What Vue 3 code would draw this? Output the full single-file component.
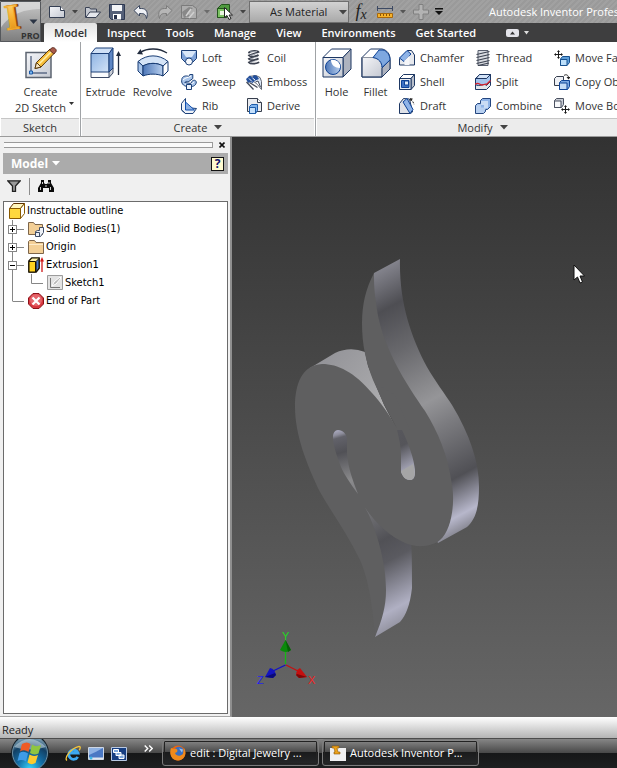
<script setup>
import { ref } from 'vue'

const activeTab = ref('Model')
const tabs = ['Model', 'Inspect', 'Tools', 'Manage', 'View', 'Environments', 'Get Started']

const quickTools = [
  { icon: 'new', label: 'New' },
  { drop: true, label: 'New options' },
  { icon: 'open', label: 'Open' },
  { icon: 'save', label: 'Save' },
  { icon: 'undo', label: 'Undo' },
  { icon: 'redo', label: 'Redo' },
  { icon: 'update', label: 'Update' },
  { drop: true, soft: true, label: 'Update options' },
  { icon: 'pick', label: 'Select' },
  { drop: true, label: 'Select options' }
]

const panels = [
  {
    name: 'Create', key: 'create',
    large: [
      { icon: 'extrude', label: 'Extrude' },
      { icon: 'revolve', label: 'Revolve' }
    ],
    columns: [
      [['loft', 'Loft'], ['sweep', 'Sweep'], ['rib', 'Rib']],
      [['coil', 'Coil'], ['emboss', 'Emboss'], ['derive', 'Derive']]
    ]
  },
  {
    name: 'Modify', key: 'modify',
    large: [
      { icon: 'hole', label: 'Hole' },
      { icon: 'fillet', label: 'Fillet' }
    ],
    columns: [
      [['chamfer', 'Chamfer'], ['shell', 'Shell'], ['draft', 'Draft']],
      [['thread', 'Thread'], ['split', 'Split'], ['combine', 'Combine']],
      [['moveface', 'Move Face'], ['copy', 'Copy Object'], ['movebody', 'Move Bodies']]
    ]
  }
]

const tree = [
  { icon: 'folderbody', label: 'Solid Bodies(1)', mark: '+' },
  { icon: 'folder', label: 'Origin', mark: '+' },
  { icon: 'extrusion', label: 'Extrusion1', mark: '-' },
  { icon: 'sketch', label: 'Sketch1', nested: true },
  { icon: 'end', label: 'End of Part', last: true }
]
</script>

<template>
  <div class="app">
    <svg class="defs" aria-hidden="true">
      <defs>
        <linearGradient id="gBlue" x1="0" y1="0" x2="1" y2="1"><stop offset="0" stop-color="#8fb4e3" /><stop offset="1" stop-color="#d3e3f7" /></linearGradient>
        <linearGradient id="gBlueDeep" x1="0" y1="0" x2="1" y2="0"><stop offset="0" stop-color="#4d77b8" /><stop offset="1" stop-color="#b8cfee" /></linearGradient>
        <linearGradient id="gGrey" x1="0" y1="0" x2="1" y2="1"><stop offset="0" stop-color="#f4f5f8" /><stop offset="1" stop-color="#c5c9d2" /></linearGradient>
        <linearGradient id="gGold" x1="0" y1="0" x2="0" y2="1"><stop offset="0" stop-color="#ffe08a" /><stop offset=".5" stop-color="#f9b233" /><stop offset="1" stop-color="#d9860f" /></linearGradient>
      </defs>

      <symbol id="i-new" viewBox="0 0 16 16"><path d="M.5 2.500h11l4 4v7H.5z" fill="url(#gGrey)" stroke="#343e52" /><path d="M11.500 2.500v4h4" fill="#fff" stroke="#343e52" /></symbol>
      <symbol id="i-open" viewBox="0 0 16 16"><path d="M.5 13.500v-10h4l1 1.500h6v3" fill="#c4c8d0" stroke="#3a4255" /><path d="M.8 13.500l4-5.500h10.700l-4.500 5.500z" fill="#e6e8ed" stroke="#3a4255" /></symbol>
      <symbol id="i-save" viewBox="0 0 16 16"><path d="M.5.500h15v15h-13l-2-2z" fill="#556078" stroke="#2c3750" /><path d="M3 1h10v6H3z" fill="#f3f4f6" /><path d="M4 10h8v5.500H4z" fill="#fff" /><path d="M5 11h3v4H5z" fill="#26304a" /></symbol>
      <symbol id="i-undo" viewBox="0 0 16 16"><path d="M1 6.500L6.500 1.500v3h2c5 0 7 4 5 10-.5-4-2.500-5-5-5h-2v2.500z" fill="#eff1f5" stroke="#3b475f" stroke-linejoin="round" /></symbol>
      <symbol id="i-redo" viewBox="0 0 16 16"><path d="M15 6.500L9.500 1.500v3h-2c-5 0-7 4-5 10 .5-4 2.500-5 5-5h2v2.500z" fill="#b6b6b6" stroke="#7c7c7c" stroke-linejoin="round" /></symbol>
      <symbol id="i-update" viewBox="0 0 16 16"><path d="M.5 1.500h11l4 3v10H.5z" fill="#adadad" stroke="#7b7b7b" /><path d="M1 8l7-5 4 1-6 5 3 3-6 2z" fill="#888" /><path d="M5 12l5-7M8 14l5-6" stroke="#d0d0d0" stroke-width="1.500" /></symbol>
      <symbol id="i-pick" viewBox="0 0 16 16"><path d="M.5 4.500l4-4h8v9l-3 4h-9z" fill="#4f9a3f" stroke="#24561d" /><path d="M.5 4.500h9v9h-9z" fill="#7cc263" stroke="#24561d" /><path d="M3 7h5v4H3z" fill="#e8f5df" /><path d="M7.500 3.500v10l2.500-2 2 4 2-1-2-3.500h3.500z" fill="#fff" stroke="#222" /></symbol>
      <symbol id="i-measure" viewBox="0 0 16 16"><path d="M.5 2v5M15.500 2v5M1 4.500h14" stroke="#3d4a63" fill="none" /><path d="M.5 9.500h15v4H.5z" fill="#f6b32c" stroke="#a8690c" /><path d="M3.500 10v2M6.500 10v2M9.500 10v2M12.500 10v2" stroke="#8b5408" /></symbol>
      <symbol id="i-plus" viewBox="0 0 16 16"><path d="M6 .500h4V6h5.500v4H10v5.500H6V10H.5V6H6z" fill="#b3b3b3" stroke="#808080" /></symbol>

      <symbol id="i-sketch2d" viewBox="0 0 32 32"><path d="M1 5.500h25v25H1z" fill="url(#gGrey)" stroke="#5c6470" stroke-width="1.500" /><path d="M6 9v17h16" fill="none" stroke="#23365c" /><path d="M4.500 24h3v3h-3z" fill="#7cb8f0" stroke="#1b5aa8" /><path d="M10 21.500l1.500-6L25 2l4.500 4L16 20z" fill="#f7bd3a" stroke="#5a3a0c" /><path d="M13.500 17.500L27 4" stroke="#fff0a8" stroke-width="1.600" /><path d="M10 21.500l1.500-6 4.500 4.500z" fill="#f7e4c0" stroke="#5a3a0c" /><path d="M24.500 3L27 .800c2-.8 5 1.500 4 3.700L28.800 7z" fill="#a85a4a" stroke="#5b2a20" /></symbol>
      <symbol id="i-extrude" viewBox="0 0 32 32"><path d="M1 25l4-4h18l-4 9.500H1z" fill="#fafbfd" stroke="#3c4a66" /><path d="M19 25l4-4v5l-4 4.500z" fill="#c9cdd5" stroke="#3c4a66" /><path d="M1 6.500h18V25H1z" fill="url(#gBlue)" stroke="#1d4079" /><path d="M1 6.500L5.500 1H23l-4 5.500z" fill="#cfe0f6" stroke="#1d4079" /><path d="M19 6.500L23 1v20l-4 4z" fill="#5f87c4" stroke="#1d4079" /><path d="M28.500 28V6" stroke="#222c3e" stroke-width="1.300" /><path d="M26 9l2.500-5L31 9z" fill="#222c3e" /></symbol>
      <symbol id="i-revolve" viewBox="0 0 32 32"><path d="M1 14.500C10 7 22 7 31 14.500l-5 4.500c-6-3.500-14-3.500-20 0z" fill="#d5e4f7" stroke="#173b73" /><path d="M1 14.500l5 4.500v10l-5-5z" fill="#a9c5ea" stroke="#173b73" /><path d="M6 19c6-3.500 14-3.500 20 0v10c-6-2.500-14-2.500-20 0z" fill="url(#gBlueDeep)" stroke="#173b73" /><path d="M31 14.500l-5 4.500v10l5-5z" fill="#fff" stroke="#173b73" /><path d="M3 5.500c8-5 19-4.500 27 .5" fill="none" stroke="#222c3e" stroke-width="1.300" /><path d="M0 7l3.500-5L6 7.500z" fill="#222c3e" /></symbol>
      <symbol id="i-hole" viewBox="0 0 32 32"><path d="M2 10.500L10.500 2H30l-8 8.500z" fill="#fff" stroke="#1d3763" /><path d="M22 10.500L30 2v20l-8 8z" fill="#aeb3bf" stroke="#1d3763" /><path d="M2 10.500h20V30H2z" fill="url(#gGrey)" stroke="#1d3763" /><circle cx="12" cy="20" r="7.500" fill="url(#gBlueDeep)" stroke="#0f4396" /><path d="M10 13c0 5 4 8 9 8 1-4-3-9-9-8z" fill="#fff" /></symbol>
      <symbol id="i-fillet" viewBox="0 0 32 32"><path d="M2 10.500L10.500 2H22c5 1 8 5 8 10v10l-8 8H2z" fill="#fff" stroke="#1d3763" /><path d="M2 10.500h11c6 1 9 5 9 10V30H2z" fill="url(#gGrey)" stroke="#8d94a1" /><path d="M22 21l8-8v9l-8 8z" fill="#aeb3bf" stroke="#1d3763" /><path d="M13 10.500L19 3h4c4 1 7 5 7 10l-8 7.500c0-5-3-9-9-10z" fill="#7fa8e0" stroke="#0f4396" /><path d="M2 10.500V30h20" fill="none" stroke="#1d3763" /></symbol>

      <symbol id="i-loft" viewBox="0 0 16 16"><path d="M.5.500h15v8l-4 4h-7l-4-4z" fill="#7fa3d8" stroke="#1c4078" /><path d="M1 1h14l-4 6H5z" fill="#d9e7f8" /><circle cx="8" cy="11.500" r="3.500" fill="#f6f9fd" stroke="#1c4078" /></symbol>
      <symbol id="i-sweep" viewBox="0 0 16 16"><path d="M.8 5.500c0-3 4-4.500 7-3l1-2h3v4l-4 3c-2 0-3-.500-4 1l6 1 1-2c2-2 4-1.500 4.500.5 0 3-3 5-6 4.500h-3C2 12 0 9 .8 5.500z" fill="#a9c5ea" stroke="#1c4078" /><path d="M2 6c3-3 5-2 8-4M4 10c4 2 7 0 9-2" stroke="#fff" fill="none" /><path d="M5.500 10.500h5v5h-5z" fill="#edf3fb" stroke="#1c4078" /></symbol>
      <symbol id="i-rib" viewBox="0 0 16 16"><path d="M.5 5.500l4-5v9l11 1-3.500 5H4.500l-4-3.500z" fill="#eef2f8" stroke="#1c4078" /><path d="M4.500 4l9 8h-9z" fill="#8db1e3" stroke="#0f4fb0" /><path d="M.5 12l4 3.500h7.500" fill="none" stroke="#1c4078" /></symbol>
      <symbol id="i-coil" viewBox="0 0 16 16"><g fill="none" stroke="#3c4250" stroke-width="1.800" stroke-linecap="round"><path d="M3 2.500c2-2 9-2 9.500-.5L3 5.500c1 1.500 7 1.500 9.500-.5L3 9c1 1.500 7 1.500 9.500-.5L3 12.500c1 1.500 7 1.500 9.500 0" /></g><path d="M4 2l7-.5M4 5.500l7-2M4 9l7-2M4 12.500l7-2" stroke="#c7cbd4" stroke-width=".700" /></symbol>
      <symbol id="i-emboss" viewBox="0 0 16 16"><path d="M3 2.500l7-1 4 2 1.500 4v8l-4-5-5-4z" fill="#dbe6f5" stroke="#5e6470" /><path d="M0 5l4-3.500 2 2 2-2.500 3 1 2 3-5 2-1 2-3-1-2 1z" fill="#234f9c" /><path d="M3 4.500l3 3M6.500 4l2.500 2" stroke="#fff" /><path d="M.5 8l7 7.500M3.500 8.500l8 5" fill="none" stroke="#444b59" stroke-width="1.300" /><path d="M9.500 8l2.500-1 2.500 6" fill="#fff" stroke="#444b59" /></symbol>
      <symbol id="i-derive" viewBox="0 0 16 16"><path d="M1.500 13.500v-13h10l4 4v9z" fill="#e9ebef" stroke="#363e4d" /><path d="M11.500.500v4h4" fill="#fff" stroke="#363e4d" /><path d="M3.500 8.500l2-2h6v6l-2 3h-6z" fill="#7fb2ec" stroke="#1c5ba8" /><path d="M3.500 9.500h6v6h-6z" fill="#c4dffa" stroke="#1c5ba8" /></symbol>
      <symbol id="i-chamfer" viewBox="0 0 16 16"><path d="M.5 8.500l8-8h4l3 4.500v10h-15z" fill="#e6e8ed" stroke="#1d3763" /><path d="M.5 8L8 .500l4 3.500-7 7.500z" fill="#8fb4e8" stroke="#0f4396" /><path d="M5.500 10.500l5-5v9.500h-5z" fill="#f5f6f9" /></symbol>
      <symbol id="i-shell" viewBox="0 0 16 16"><path d="M.5 4.500l4-4h11l-3.500 4z" fill="#fff" stroke="#1d3763" /><path d="M12 4.500l3.500-4v11l-3.500 4z" fill="#b9bfca" stroke="#1d3763" /><path d="M.5 4.500H12v11H.5z" fill="#eceef2" stroke="#1d3763" /><path d="M2.500 6.500H10v7H2.500z" fill="#3f72c4" stroke="#0f4396" /><path d="M5.500 7H9.500v4h-4z" fill="#e1edfb" stroke="#0f4396" /></symbol>
      <symbol id="i-draft" viewBox="0 0 16 16"><path d="M.5 5.500l4-5 6 .5 3 13-2 1.500H.5z" fill="#dfe2e8" stroke="#1d3763" /><path d="M4 4l4-3.500 6 11-3 4z" fill="#8fb4e8" stroke="#0f4396" /><path d="M11.500 1.500c2 1 3 3 3.500 5" fill="none" stroke="#222" stroke-dasharray="2 1" /><path d="M11 0l3 .8-2.500 2.400z" fill="#222" /></symbol>
      <symbol id="i-thread" viewBox="0 0 16 16"><path d="M3 .500h10v15H3z" fill="#d8dbe1" stroke="#596070" /><path d="M1.500 4.500l13-3M1.500 7.500l13-3M1.500 10.500l13-3M1.500 13.500l13-3M3 15.500l11-2.500" stroke="#3c4250" stroke-width="1.100" /></symbol>
      <symbol id="i-split" viewBox="0 0 16 16"><path d="M.5 4.500l4-4h11v11l-4 4H.5z" fill="#e3e6eb" stroke="#1d3763" /><path d="M.5 4.500h11L15.500.500v7l-4 4c-3-3-7 2-11-1z" fill="#a4c3ec" stroke="#1d3763" /><path d="M1 4.500l3.500-4h11l-4 4z" fill="#d3e3f7" stroke="#1d3763" /><path d="M0 10.500c3-3 5 .5 7 .5s3-1.500 4.500-.5l4-4" fill="none" stroke="#d8202a" stroke-width="1.300" /></symbol>
      <symbol id="i-combine" viewBox="0 0 16 16"><path d="M5.500 2.500l2-2h8v8l-3 3h-2v2l-2 2h-8v-8l2-2h3z" fill="#8fb4e8" stroke="#24467f" /><path d="M1 8l2-1.500h3v3h5V10L8.500 15H1z" fill="#b8d0f0" /><path d="M6 3h7v7H9V7H6z" fill="#cadcf4" /></symbol>
      <symbol id="i-moveface" viewBox="0 0 16 16"><path d="M4.500 1v7M1 4.500h7" stroke="#1a1a1a" /><path d="M4.500 0l1.500 2h-3zM4.500 9L6 7H3zM0 4.500L2 3v3zM9 4.500L7 3v3z" fill="#1a1a1a" /><path d="M6.500 9l2-2.500h7v6l-2.500 3H6.500z" fill="#5f9fd8" stroke="#16508f" /><path d="M6.500 9.500h6.500v6H6.500z" fill="#bde0fb" stroke="#16508f" /></symbol>
      <symbol id="i-copy" viewBox="0 0 16 16"><path d="M.5 4.500l2-2h7v7l-2 2h-7z" fill="#eef0f4" stroke="#363e4d" /><path d="M5.500 8.500l2-2h8v6l-2 3h-8z" fill="#7ba7e2" stroke="#0f4396" /><path d="M5.500 9h7.500v6.500H5.500z" fill="#c4daf6" stroke="#0f4396" /><path d="M10 1.500c2-1.500 4-.5 4.500 1.500" fill="none" stroke="#222" /><path d="M12.500 3h4l-2 2.500z" fill="#222" /></symbol>
      <symbol id="i-movebody" viewBox="0 0 16 16"><path d="M.5 2.500l2-2h7v6l-2 3h-7z" fill="#c9cdd5" stroke="#4a5160" /><path d="M.5 3h6.500v6.500H.5z" fill="#f7f8fa" stroke="#4a5160" /><path d="M11.500 8v7M8 11.500h7" stroke="#1a1a1a" /><path d="M11.500 7l1.500 2h-3zM11.500 16l1.500-2h-3zM7 11.500l2-1.500v3zM16 11.500l-2-1.500v3z" fill="#1a1a1a" /></symbol>

      <symbol id="i-part" viewBox="0 0 16 16"><path d="M.5 5.500l4-5h11l-4 5z" fill="#fff6bd" stroke="#5b2f00" /><path d="M11.500 5.500l4-5v10l-4 5z" fill="#fff" stroke="#8a5a00" /><path d="M.5 5.500h11v10H.5z" fill="#ffd83d" stroke="#8a5a00" /></symbol>
      <symbol id="i-folder" viewBox="0 0 16 16"><path d="M.5 14.500v-12l1-1h5l1.500 2h7.500v11z" fill="#f3cf96" stroke="#7d654a" /><path d="M1 5.500h14" stroke="#fdebcb" /></symbol>
      <symbol id="i-folderbody" viewBox="0 0 16 16"><path d="M.5 13.500v-12h5l1.500 2h7.500v10z" fill="#f3cf96" stroke="#7d654a" /><path d="M7.500 10.500l2-1h2v-3h4v5l-3 4h-5z" fill="#eef1f6" stroke="#3f4c66" /><path d="M8 11.500h3.500v4" fill="none" stroke="#3f4c66" /></symbol>
      <symbol id="i-extrusion" viewBox="0 0 16 16"><path d="M.8 4l3-3.200h7.400v10.400l-3 3.800H.8z" fill="#fff3a8" stroke="#1a1200" stroke-width="1.300" /><path d="M1 4.500h6.500V15H1z" fill="#ffd21f" stroke="#1a1200" /><path d="M8 4.500l3-3v9.500l-3 4z" fill="#4b78c9" stroke="#1a1200" /><path d="M14 15V3" stroke="#d01818" stroke-width="1.300" /><path d="M12 4.500L14 0l2 4.500z" fill="#d01818" /></symbol>
      <symbol id="i-sketch" viewBox="0 0 16 16"><path d="M.5.500h15v14H.5z" fill="#e3e3e3" stroke="#9c9c9c" /><path d="M3.500 3v9.500H13" fill="none" stroke="#777" /><path d="M5 11l2-4 6-5 1 1-5 6z" fill="#b8b8b8" stroke="#fff" /></symbol>
      <symbol id="i-end" viewBox="0 0 16 16"><path d="M5 .500h6L15.500 5v6L11 15.500H5L.5 11V5z" fill="#d8373f" stroke="#8a1219" /><circle cx="8" cy="7" r="6" fill="#ee8d8f" opacity=".55" /><path d="M4.500 4.500l7 7M11.500 4.500l-7 7" stroke="#fff" stroke-width="2.200" /></symbol>
    </svg>

    <header class="top">
      <button class="app-menu" aria-label="Application menu">
        <svg viewBox="0 0 41 41" width="41" height="41">
          <defs><linearGradient id="gApp" x1="0" y1="0" x2="0" y2="1"><stop offset="0" stop-color="#c9c9c9" /><stop offset="1" stop-color="#7c7c7c" /></linearGradient></defs>
          <path d="M0 0h41v41H0z" fill="url(#gApp)" />
          <path d="M0 28C10 12 26 8 41 8V0H0z" fill="#dedede" opacity=".7" />
          <text x="7" y="28" class="logo-i" transform="rotate(-8 13 17)" fill="#8a4d08" stroke="#8a4d08">I</text>
          <text x="5" y="28" class="logo-i" transform="rotate(-8 13 17)" fill="url(#gGold)" stroke="#f3aa2c">I</text>
          <path d="M29.500 18.500h8l-4 4.500z" fill="#2b3444" />
          <text x="21" y="38" class="logo-pro">PRO</text>
          <path d="M.5.500h40v40H.5z" fill="none" stroke="#55585c" />
        </svg>
      </button>
      <div class="title-bar">
        <button v-for="tool in quickTools" :key="tool.label" :class="tool.drop ? 'drop' : 'quick'" :aria-label="tool.label">
          <svg v-if="tool.drop" width="6" height="4" viewBox="0 0 6 4"><path d="M0 0h6L3 3.500z" :fill="tool.soft ? '#6b6b6b' : '#444'" /></svg>
          <svg v-else width="16" height="16"><use :href="'#i-' + tool.icon" /></svg>
        </button>
        <label class="material">
          <select aria-label="Material colour"><option>As Material</option></select>
          <svg width="8" height="5" viewBox="0 0 8 5"><path d="M0 0h8L4 4.500z" fill="#444" /></svg>
        </label>
        <button class="quick fx" aria-label="Parameters"><i>f</i><i class="sub">x</i></button>
        <button class="quick" aria-label="Measure"><svg width="16" height="16"><use href="#i-measure" /></svg></button>
        <button class="drop" aria-label="Measure options"><svg width="6" height="4" viewBox="0 0 6 4"><path d="M0 0h6L3 3.500z" fill="#555" /></svg></button>
        <button class="quick" aria-label="Add"><svg width="16" height="16"><use href="#i-plus" /></svg></button>
        <button class="drop" aria-label="Customize"><svg width="8" height="7" viewBox="0 0 8 7"><path d="M0 0h8v1.500H0zM0 3h8L4 7z" fill="#111" /></svg></button>
        <span class="app-title">Autodesk Inventor Professional</span>
      </div>
      <nav class="tabs">
        <button v-for="tab in tabs" :key="tab" :class="{ active: tab === activeTab }" @click="activeTab = tab">{{ tab }}</button>
        <button class="collapse" aria-label="Minimize ribbon">
          <svg width="24" height="8" viewBox="0 0 24 8"><rect width="13" height="8" rx="2" fill="#e4e4ea" /><path d="M4 5.500h5L6.500 2.500z" fill="#333" /><path d="M18 2h5l-2.500 3.500z" fill="#ddd" /></svg>
        </button>
      </nav>
    </header>

    <section class="ribbon">
      <div class="panel sketch">
        <div class="panel-body">
          <button class="large">
            <svg width="32" height="32"><use href="#i-sketch2d" /></svg>
            <span>Create</span>
            <span class="with-drop">2D Sketch<svg width="5" height="3" viewBox="0 0 5 3"><path d="M0 0h5L2.500 3z" fill="#333" /></svg></span>
          </button>
        </div>
        <div class="panel-label">Sketch</div>
      </div>
      <div v-for="panel in panels" :key="panel.key" class="panel" :class="panel.key">
        <div class="panel-body">
          <button v-for="tool in panel.large" :key="tool.label" class="large">
            <svg width="32" height="32"><use :href="'#i-' + tool.icon" /></svg>
            <span>{{ tool.label }}</span>
          </button>
          <div class="columns">
            <div v-for="(column, n) in panel.columns" :key="n" class="column">
              <button v-for="[icon, label] in column" :key="icon" class="small">
                <svg width="16" height="16"><use :href="'#i-' + icon" /></svg>{{ label }}
              </button>
            </div>
          </div>
        </div>
        <button class="panel-label">{{ panel.name }}<svg width="8" height="5" viewBox="0 0 8 5"><path d="M0 0h8L4 4.500z" fill="#444" /></svg></button>
      </div>
    </section>

    <main class="work">
      <aside class="browser">
        <div class="grip">
          <i class="lines"></i>
          <button aria-label="Close"><svg width="6" height="6" viewBox="0 0 6 6"><path d="M.5.500l5 5M5.500.500l-5 5" stroke="#111" stroke-width="1.600" /></svg></button>
        </div>
        <div class="browser-title">
          <button class="mode">Model<svg width="8" height="5" viewBox="0 0 8 5"><path d="M0 0h8L4 4.500z" fill="#fff" /></svg></button>
          <button class="help" aria-label="Help">?</button>
        </div>
        <div class="browser-tools">
          <button aria-label="Filter"><svg width="14" height="12" viewBox="0 0 14 12"><path d="M.8.800h12.400L8.500 6v5.500h-3V6z" fill="#9a9a9a" stroke="#222" stroke-width="1.300" /></svg></button>
          <i class="bar"></i>
          <button aria-label="Find"><svg width="16" height="14" viewBox="0 0 16 14"><path d="M3 1h3v3l1 1h2l1-1V1h3v3l3 5v4h-5V9H5v4H0V9l3-5z" fill="#0b0b0b" /><path d="M2.500 8v3M4.500 3v2M11 3v2M12.500 8v3M7 7h2" stroke="#e8e8e8" stroke-width=".900" /></svg></button>
        </div>
        <ul class="tree">
          <li class="root"><svg width="16" height="16"><use href="#i-part" /></svg><span>Instructable outline</span></li>
          <li v-for="node in tree" :key="node.label">
            <svg :width="node.nested ? 43 : 24" height="18" stroke="#868686" fill="none">
              <path :d="node.last ? 'M8.500 0V9' : 'M8.500 0V18'" />
              <path v-if="!node.nested" d="M8.500 9.500H20" />
              <path v-else d="M27.500 0V9.500H39" />
              <g v-if="node.mark"><rect x="4.500" y="5.500" width="8" height="8" fill="#fff" /><path d="M6 9.500h5" stroke="#000" /><path v-if="node.mark === '+'" d="M8.500 7v5" stroke="#000" /></g>
            </svg>
            <svg width="16" height="16"><use :href="'#i-' + node.icon" /></svg><span>{{ node.label }}</span>
          </li>
        </ul>
      </aside>

      <div class="viewport">
        <svg class="scene" viewBox="232 137 385 580" preserveAspectRatio="xMidYMid slice">
          <defs>
            <linearGradient id="wallRight" gradientUnits="userSpaceOnUse" x1="374" y1="273" x2="501" y2="508">
              <stop offset="0" stop-color="#83838c" /><stop offset=".14" stop-color="#4e4e53" /><stop offset=".3" stop-color="#68686c" /><stop offset=".47" stop-color="#8b8b8e" /><stop offset=".52" stop-color="#959598" /><stop offset=".62" stop-color="#7c7c80" /><stop offset=".82" stop-color="#505055" /><stop offset=".95" stop-color="#b7b7cb" /><stop offset="1" stop-color="#8d8d99" />
            </linearGradient>
            <linearGradient id="wallLow" gradientUnits="userSpaceOnUse" x1="362" y1="505" x2="421" y2="614">
              <stop offset="0" stop-color="#7c7c7f" /><stop offset=".33" stop-color="#515156" /><stop offset=".5" stop-color="#5a5a60" /><stop offset=".86" stop-color="#b0b0c3" /><stop offset="1" stop-color="#92929f" />
            </linearGradient>
            <linearGradient id="wallTop" gradientUnits="userSpaceOnUse" x1="320" y1="350" x2="385" y2="405">
              <stop offset="0" stop-color="#929297" /><stop offset=".7" stop-color="#a4a4a7" /><stop offset="1" stop-color="#b0b0b2" />
            </linearGradient>
            <linearGradient id="slotLeft" gradientUnits="userSpaceOnUse" x1="338" y1="430" x2="356" y2="492">
              <stop offset="0" stop-color="#a9a9bf" /><stop offset=".07" stop-color="#8c8c9a" /><stop offset=".12" stop-color="#62626a" /><stop offset=".35" stop-color="#515156" /><stop offset=".8" stop-color="#8a8a8c" /><stop offset="1" stop-color="#808083" />
            </linearGradient>
            <linearGradient id="slotRight" gradientUnits="userSpaceOnUse" x1="395" y1="425" x2="418" y2="467">
              <stop offset="0" stop-color="#58585d" /><stop offset=".45" stop-color="#55555a" /><stop offset="1" stop-color="#adadc0" />
            </linearGradient>
          </defs>
          <path d="M310 368L335 353Q350 346 365 352L368 366L384 405L398 432L360 400L330 368z" fill="url(#wallTop)" />
          <path d="M374 273L400 259C399 300 410 335 427 367C435 381 445 394 452 405C470 435 479 462 479 487C479 507 476 519 467 527L438 543L420 500L390 390L370 330z" fill="url(#wallRight)" />
          <path d="M358 492L372 505L411 540C412 555 412 570 412 588C410 605 406 615 400 622L375 637L380 600L376 560z" fill="url(#wallLow)" />
          <path d="M374 273C366 288 362 304 362 323C362 345 366 362 373 380L384 404L397 428C388 413 382 404 372 393C354 372 338 364 322 364C302 365 295 384 295 407C295 435 307 465 320 492C332 513 348 535 360 560C368 579 372 600 375 637C382 620 386 607 386 590C386 560 376 531 368 513L355 489L348 475C360 507 382 533 405 543C416 548 432 547 440 540C452 530 455 502 452 485C448 455 438 432 425 411C407 385 380 345 376 302C374 290 374 280 374 273z" fill="#5f5f60" />
          <path d="M375 383L384 404L398 430L410 430L395 395z" fill="#5f5f60" />
          <path d="M333 437C333 433 335 430 338 430C343 430 346 434 347 438V453C348 468 353 481 358 494C350 483 344 474 341 467C337 456 333 446 333 437z" fill="url(#slotLeft)" />
          <path d="M397 430L402 430C407 440 415 460 415 472C415 478 413 480 410 480C406 480 403 477 401 472V455C401 447 399 438 397 430z" fill="url(#slotRight)" />
          <path d="M401 471L413 464C416 473 415 480 410 480C405 480 402 476 401 471z" fill="#a5a5a6" />
          <g class="axes">
            <path d="M285.500 664V650" stroke="#16b916" stroke-width="1.300" /><path d="M285.500 665L273 671" stroke="#1010c8" stroke-width="1.300" /><path d="M286 665L298 671" stroke="#c81010" stroke-width="1.300" />
            <path d="M285.500 640L291 650Q286 654 280 650z" fill="#0b8a0b" /><path d="M285.500 640L288 652L291 650z" fill="#076007" />
            <path d="M265 677L270 668Q275 669 276 675L273 678z" fill="#1414c0" /><path d="M265 677L275 673L276 675L273 678z" fill="#0a0a78" />
            <path d="M307 677L300 668Q296 670 296 675L299 678z" fill="#c41010" /><path d="M307 677L297 674L296 675L299 678z" fill="#7c0808" />
            <text x="282" y="640" fill="#22d822">Y</text><text x="257" y="684" fill="#2222f0">Z</text><text x="308" y="684" fill="#f02222">X</text>
          </g>
          <path d="M574 265v15l3.500-3 2.500 6 2.500-1-2.500-6h4.500z" fill="#fff" stroke="#111" />
        </svg>
      </div>
    </main>

    <div class="status">Ready</div>

    <footer class="taskbar">
      <button class="start" aria-label="Start">
        <svg width="42" height="30" viewBox="0 0 42 30">
          <defs><radialGradient id="gOrb" cx=".5" cy=".95" r=".9"><stop offset="0" stop-color="#35d4fb" /><stop offset=".4" stop-color="#1570a8" /><stop offset=".75" stop-color="#123f63" /><stop offset="1" stop-color="#7fa3b8" /></radialGradient></defs>
          <circle cx="21" cy="14" r="19" fill="#14202a" /><circle cx="21" cy="14" r="17.500" fill="url(#gOrb)" stroke="#6c8fa3" />
          <path d="M5 8Q20-8 37 8Q21 13 5 8z" fill="#d9e8ee" opacity=".5" />
          <path d="M13 5q5-3 8.500 0l-2 8q-4-3-8.500-.5z" fill="#ee5b25" /><path d="M23 5.500q4 3 9 .5l-2.500 8.500q-5 2-8.500-.5z" fill="#8fc63f" /><path d="M10.500 14q4-2.500 8.500.5l-2 8q-4-2.500-8.500-.500z" fill="#3f9be8" /><path d="M20.500 15.500q4 2.500 8.500.5l-2.500 8q-4 2.500-8-.500z" fill="#fccb2e" />
        </svg>
      </button>
      <div class="quick-launch">
        <button aria-label="Internet Explorer"><svg width="16" height="17" viewBox="0 0 17 17"><path d="M13.500 12a5 5 0 1 1 .3-4H5" fill="none" stroke="#3da9f2" stroke-width="3" /><path d="M2 16C-1 13 6 3 15 1c2 0 1 3 0 4" fill="none" stroke="#f5c53a" stroke-width="1.400" /></svg></button>
        <button aria-label="Show desktop"><svg width="16" height="14" viewBox="0 0 16 14"><path d="M.5.500h15v12H.5z" fill="#4a78c4" stroke="#ced7e4" /><path d="M1 8Q8 5 15 1V1H1z" fill="#8fb2e4" /><path d="M1 10.500h14V12H1z" fill="#dfe5ee" /><circle cx="3" cy="11" r="1.500" fill="#3eb8e8" /></svg></button>
        <button aria-label="Switch windows"><svg width="16" height="14" viewBox="0 0 16 14"><path d="M.5.500h15v13H.5z" fill="#163e82" stroke="#b9c9e2" /><path d="M2.500 2.500h5v3h-5zM5 5.500h5v3H5zM8 8h5v3.500H8z" fill="#7fa9dd" stroke="#fff" /></svg></button>
      </div>
      <button class="more" aria-label="More"><svg width="9" height="7" viewBox="0 0 9 7"><path d="M.7.500l3 3-3 3M5.200.500l3 3-3 3" fill="none" stroke="#fff" stroke-width="1.400" /></svg></button>
      <button class="task">
        <svg width="16" height="16" viewBox="0 0 16 16"><circle cx="8" cy="8" r="7.500" fill="#e8640f" /><circle cx="9" cy="6.500" r="4.800" fill="#3b6fc0" /><path d="M1 3c1 0 2 1 3 1 3-1 4 1 3 3l-2 1c1 3 5 4 8 1l1-6c3 5 1 12-6 12.500C1 15.500-1 8 1 3z" fill="#f08a1c" /><path d="M9 3.500l4 1-1 3z" fill="#9cc4f0" /></svg>
        <span>edit : Digital Jewelry ...</span>
      </button>
      <button class="task">
        <svg width="16" height="16" viewBox="0 0 16 16"><path d="M0 3h16v13H0z" fill="#f0f0f2" /><path d="M2 1h7v2H7l1 4h2v2H4V7h1L4 3H2z" fill="#eca21a" stroke="#8a5607" stroke-width=".600" /></svg>
        <span>Autodesk Inventor P...</span>
      </button>
    </footer>
  </div>
</template>

<style>
body {
  margin: 0;
}
</style>

<style scoped>
.app {
  display: flex;
  flex-direction: column;
  min-height: 100vh;
  overflow: hidden;
  font-family: "Open Sans", "Noto Sans", sans-serif;
  font-size: 11px;
  line-height: 16px;
  color: #333;
  background: #f0f0f0;
}
.app *,
.app {
  box-sizing: border-box;
}
.defs {
  position: absolute;
  width: 0;
  height: 0;
}
svg {
  display: block;
  flex: none;
}
button {
  font: inherit;
  color: inherit;
  background: none;
  border: 0;
  padding: 0;
  margin: 0;
}

/* title bar and tabs */
.top {
  display: grid;
  grid-template-columns: 41px minmax(0, 1fr);
  grid-template-rows: 23px 19px;
  background: #3e3e3f;
}
.app-menu {
  grid-row: 1 / 3;
}
.app-menu svg {
  overflow: visible;
}
.logo-i {
  font: bold 36px "Liberation Serif", serif;
}
.logo-pro {
  font: bold 9px "Open Sans", sans-serif;
  fill: #333;
}
.title-bar {
  display: flex;
  align-items: center;
  padding-left: 4px;
  overflow: hidden;
  background: repeating-linear-gradient(135deg, #a1a1a1 0 2px, #9a9a9a 2px 4px);
  white-space: nowrap;
}
.quick {
  flex: none;
  width: 24px;
  height: 22px;
  display: flex;
  align-items: center;
  justify-content: center;
}
.drop {
  flex: none;
  width: 12px;
  display: flex;
  justify-content: center;
}
.material {
  flex: none;
  position: relative;
  width: 100px;
  height: 22px;
}
.material select {
  appearance: none;
  width: 100%;
  height: 100%;
  padding: 0 16px 0 20px;
  border: 1px solid #6f6f6f;
  border-radius: 0;
  background: linear-gradient(#d2d2d2, #a9a9a9);
  font: inherit;
  color: #222;
}
.material svg {
  position: absolute;
  right: 2px;
  top: 9px;
}
.fx {
  font: 18px "Liberation Serif", serif;
  color: #222;
}
.fx .sub {
  font-size: 14px;
  padding-top: 6px;
}
.app-title {
  padding-left: 44px;
  color: #fff;
}
.tabs {
  display: flex;
  align-items: stretch;
  padding-left: 3px;
  white-space: nowrap;
}
.tabs button {
  flex: none;
  padding: 0 10px;
  color: #fff;
  font-weight: 600;
}
.tabs .active {
  background: linear-gradient(#e2e2e2, #fff);
  border-radius: 2px 2px 0 0;
  color: #333;
}
.tabs .collapse {
  padding: 0 0 0 20px;
}

/* ribbon */
.ribbon {
  display: flex;
  overflow: hidden;
  border-bottom: 1px solid #9b9b9b;
  background: #fff;
}
.panel {
  flex: none;
  display: flex;
  flex-direction: column;
  border-right: 1px solid #a0a3a6;
}
.sketch {
  width: 81px;
}
.panel-body {
  display: flex;
  height: 76px;
  padding: 4px 0 0 1px;
}
.panel-label {
  display: flex;
  align-items: center;
  justify-content: center;
  gap: 7px;
  height: 18px;
  margin: 0 1px;
  border-top: 1px solid #c6c6c6;
  background: #ececec;
}
.large {
  display: flex;
  flex-direction: column;
  align-items: center;
  padding-top: 1px;
}
.large svg {
  margin-bottom: 5px;
}
.sketch .large {
  width: 100%;
}
.create .large {
  width: 47px;
}
.modify .large {
  width: 39px;
}
.with-drop {
  position: relative;
}
.with-drop svg {
  position: absolute;
  right: -8px;
  top: 2px;
}
.columns {
  display: flex;
  padding-left: 5px;
}
.modify .columns {
  padding-left: 4px;
}
.column {
  display: flex;
  flex-direction: column;
}
.create .column:nth-child(1) {
  width: 65px;
}
.create .column:nth-child(2) {
  width: 69px;
}
.modify .column:nth-child(1) {
  width: 76px;
}
.modify .column:nth-child(2) {
  width: 79px;
}
.modify .column:nth-child(3) {
  width: 95px;
}
.small {
  display: flex;
  align-items: center;
  gap: 5px;
  height: 24px;
  white-space: nowrap;
}

/* model browser */
.work {
  flex: 1;
  display: flex;
  min-height: 0;
}
.browser {
  flex: none;
  display: flex;
  flex-direction: column;
  width: 232px;
  padding: 0 2px 2px 3px;
  border-right: 2px solid #8f8f8f;
  border-bottom: 1px solid #a5a5a5;
  color: #000;
}
.grip {
  display: flex;
  align-items: center;
  height: 16px;
}
.lines {
  flex: 1;
  height: 6px;
  margin-left: 1px;
  border: solid #9a9a9a;
  border-width: 1px 1px 1px 0;
  background: #fafafa;
}
.grip button {
  margin: 0 3px 0 6px;
}
.browser-title {
  display: flex;
  align-items: center;
  justify-content: space-between;
  height: 21px;
  padding: 0 4px 0 8px;
  background: #ababab;
}
.mode {
  display: flex;
  align-items: center;
  gap: 4px;
  color: #fff;
  font-size: 12px;
  font-weight: 700;
}
.help {
  width: 13px;
  height: 14px;
  border: 1px solid #111;
  background: #fffbd0;
  color: #10106a;
  font-size: 12px;
  font-weight: 700;
  line-height: 12px;
  text-align: center;
}
.browser-tools {
  display: flex;
  align-items: center;
  gap: 8px;
  height: 27px;
  padding: 0 4px 3px;
}
.bar {
  width: 1px;
  height: 17px;
  background: #8c8c8c;
}
.tree {
  flex: 1;
  margin: 0;
  padding: 0;
  list-style: none;
  border: 1px solid #6b6b6b;
  background: #fff;
  font-family: "DejaVu Sans Condensed", "Open Sans", sans-serif;
}
.tree li {
  display: flex;
  align-items: center;
  height: 18px;
}
.tree .root {
  padding-left: 5px;
}
.tree span {
  padding-left: 2px;
}

/* canvas */
.viewport {
  flex: 1;
  position: relative;
  min-width: 0;
  background: linear-gradient(#323232, #666);
}
.scene {
  position: absolute;
  width: 100%;
  height: 100%;
}
.axes text {
  font: 11px "Liberation Sans", sans-serif;
}

/* status and taskbar */
.status {
  height: 21px;
  padding: 5px 2px 0;
  background: linear-gradient(#fff, #b4b4b4);
  color: #222;
}
.taskbar {
  display: flex;
  height: 30px;
  overflow: hidden;
  border-top: 1px solid #4c4c4c;
  background: linear-gradient(#868686, #484848 48%, #161718 50%, #1d1f20);
}
.start {
  padding-left: 9px;
}
.quick-launch {
  display: flex;
  align-items: center;
  gap: 7px;
  padding-left: 14px;
}
.more {
  align-self: flex-start;
  padding: 6px 9px 0 17px;
}
.task {
  flex: 0 1 157px;
  display: flex;
  align-items: center;
  gap: 4px;
  min-width: 0;
  height: 27px;
  margin: 0 3px 0 0;
  padding: 0 8px 0 7px;
  border: 1px solid #7b7b7b;
  border-radius: 3px;
  outline: 1px solid #222;
  outline-offset: -3px;
  background: linear-gradient(#8a8a8a, #4c4c4c 46%, #1a1b1c 50%, #26282a);
  color: #fff;
}
.task span {
  white-space: nowrap;
}
</style>
